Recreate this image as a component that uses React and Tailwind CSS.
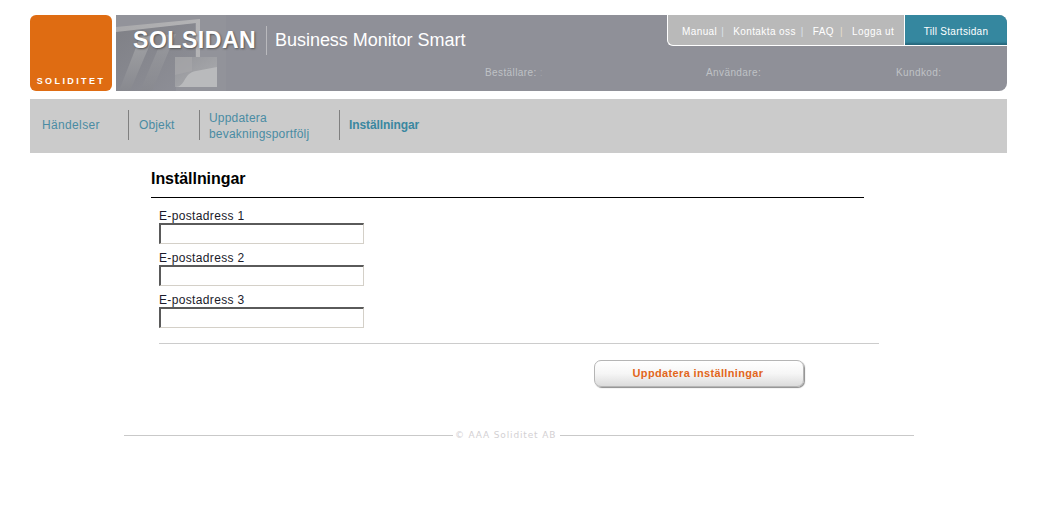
const inputRows = ["E-postadress 1", "E-postadress 2", "E-postadress 3"];

function BannerArt() {
  return (
    <svg className="absolute left-0 top-0" width="110" height="76" viewBox="0 0 110 76">
      <defs>
        <linearGradient id="inner" x1="0" y1="0" x2="1" y2="1">
          <stop offset="0" stopColor="#7f8086" />
          <stop offset="1" stopColor="#8f9098" />
        </linearGradient>
        <linearGradient id="frame" x1="0" y1="0" x2="1" y2="0">
          <stop offset="0" stopColor="#a9a9ab" />
          <stop offset="1" stopColor="#b4b4b6" />
        </linearGradient>
        <linearGradient id="beam" x1="0" y1="0" x2="0" y2="1">
          <stop offset="0" stopColor="#a2a3a6" />
          <stop offset="1" stopColor="#88898f" />
        </linearGradient>
        <linearGradient id="card" x1="0" y1="0" x2="1" y2="1">
          <stop offset="0" stopColor="#94959a" />
          <stop offset="1" stopColor="#acadb0" />
        </linearGradient>
      </defs>
      <rect width="110" height="76" fill="#92939a" />
      <path d="M0 16 L79 8 L79 42 L60 42 L60 76 L0 76 Z" fill="url(#inner)" />
      <path d="M0 12 L84 4 L84 42 L80 42 L80 8 L0 17 Z" fill="url(#frame)" />
      <path d="M24 22 L38 20 L14 76 L3 76 Z" fill="url(#beam)" />
      <path d="M48 20 L60 19 L36 76 L24 76 Z" fill="url(#beam)" opacity="0.65" />
      <path d="M59 42 L101 42 L101 72 L59 72 Z" fill="url(#card)" />
      <path d="M59 72 C70 72 67 58 80 56 L101 52 L101 72 Z" fill="#b9babc" />
      <path d="M59 42 L76 42 L76 56 L59 60 Z" fill="#a6a7aa" opacity="0.7" />
    </svg>
  );
}

export default function App() {
  return (
    <div className="min-h-[525px] bg-white pt-[15px] font-['Liberation_Sans',Arial,sans-serif]">
      <div className="mx-[30px] w-[977px]">
        <header className="flex h-[76px] gap-[4px]">
          <div className="flex w-[82px] flex-col items-center justify-end rounded-[6px] bg-[#df6c12] pb-[5px]">
            <span className="text-[9px] font-bold leading-[10px] tracking-[2.4px] text-white">SOLIDITET</span>
          </div>
          <div className="relative flex flex-1 flex-col overflow-hidden rounded-r-[8px] bg-[#8f9098]">
            <BannerArt />
            <div className="relative flex h-[31px] items-start justify-between">
              <div className="flex items-center pl-[17px] pt-[10px]">
                <span className="w-[124px] whitespace-nowrap text-[23px] font-bold leading-[30px] tracking-[0.55px] text-white [text-shadow:1px_1px_2px_#555]">SOLSIDAN</span>
                <span className="ml-[9px] h-[29px] w-px bg-[#b9b9bd]" />
                <span className="ml-[8px] text-[18px] leading-[30px] tracking-[-0.03px] text-white">Business Monitor Smart</span>
              </div>
              <div className="flex">
                <div className="flex h-[31px] w-[237px] items-center rounded-bl-[6px] border-b border-l border-white bg-[#b9b9b9] pl-[14px] pt-[2px] text-[10px] tracking-[0.4px] text-white">
                  <span>Manual</span>
                  <span className="ml-[4px] text-[#d9e2ea]">|</span>
                  <span className="ml-[9px]">Kontakta oss</span>
                  <span className="ml-[5px] text-[#d9e2ea]">|</span>
                  <span className="ml-[9px]">FAQ</span>
                  <span className="ml-[6px] text-[#e6dccb]">|</span>
                  <span className="ml-[9px]">Logga ut</span>
                </div>
                <div className="flex h-[31px] w-[103px] items-center justify-center border-b border-l border-white bg-[#35879f] pt-[2px] text-[10px] tracking-[0.3px] text-white [box-shadow:inset_0_-3px_2px_-1px_#27687c]">
                  Till Startsidan
                </div>
              </div>
            </div>
            <div className="relative flex flex-1 items-center pt-[7px] text-[10px] tracking-[0.4px] text-[#bfc2c6]">
              <span className="ml-[369px] w-[221px]">Beställare:<span className="text-[#a0a1a8]"> :</span></span>
              <span className="w-[190px]">Användare:</span>
              <span>Kundkod:</span>
            </div>
          </div>
        </header>

        <nav className="mt-[8px] flex h-[54px] items-center bg-[#cbcbcb] pb-[2px] text-[12px] leading-[16px] tracking-[0.15px] text-[#4a8ba3]">
          <a className="w-[98px] pl-[12px] tracking-[0.35px]">Händelser</a>
          <a className="flex h-[30px] w-[71px] items-center border-l border-[#808080] pl-[10px]">Objekt</a>
          <a className="flex h-[30px] w-[140px] items-center border-l border-[#808080] pl-[9px] pt-[1px] tracking-[0.2px]">Uppdatera<br />bevakningsportfölj</a>
          <a className="flex h-[30px] items-center border-l border-[#808080] pl-[9px] font-bold tracking-[-0.1px] text-[#3a87a0]">Inställningar</a>
        </nav>

        <main className="ml-[121px]">
          <h1 className="mt-[16px] text-[16px] font-bold leading-[20px] tracking-[-0.05px] text-black">Inställningar</h1>
          <div className="mt-[8px] h-px w-[713px] bg-black" />
          <form className="ml-[8px] mt-[11px]">
            {inputRows.map((label) => (
              <div key={label} className="mb-[7px]">
                <label className="block text-[12px] leading-[14px] tracking-[0.35px] text-[#1a1a2a]">{label}</label>
                <input
                  type="text"
                  className="block h-[21px] w-[205px] border-2 border-b-1 border-r-1 border-[#5a5a5a] border-b-[#d4d0c8] border-r-[#d4d0c8] bg-white"
                />
              </div>
            ))}
            <div className="mt-[15px] h-px w-[720px] bg-[#cccccc]" />
            <div className="ml-[435px] mt-[16px] flex h-[27px] w-[210px] items-center justify-center rounded-[7px] border border-[#b5b5b5] bg-gradient-to-b from-white via-[#f6f6f6] to-[#dcdcdc] pr-[2px] text-[11px] font-bold tracking-[0.35px] text-[#e2661b] [box-shadow:1px_1px_1px_#8c8c8c]">
              Uppdatera inställningar
            </div>
          </form>
        </main>

        <footer className="ml-[94px] mt-[41px] flex w-[790px] items-center font-['DejaVu_Sans',Verdana,sans-serif] text-[9px] leading-[14px] tracking-[0.85px] text-[#d3d0d3]">
          <div className="h-px w-[329px] bg-[#c9c9c9]" />
          <span className="ml-[2px] w-[105px] whitespace-nowrap">© AAA Soliditet AB</span>
          <div className="h-px flex-1 bg-[#c9c9c9]" />
        </footer>
      </div>
    </div>
  );
}
